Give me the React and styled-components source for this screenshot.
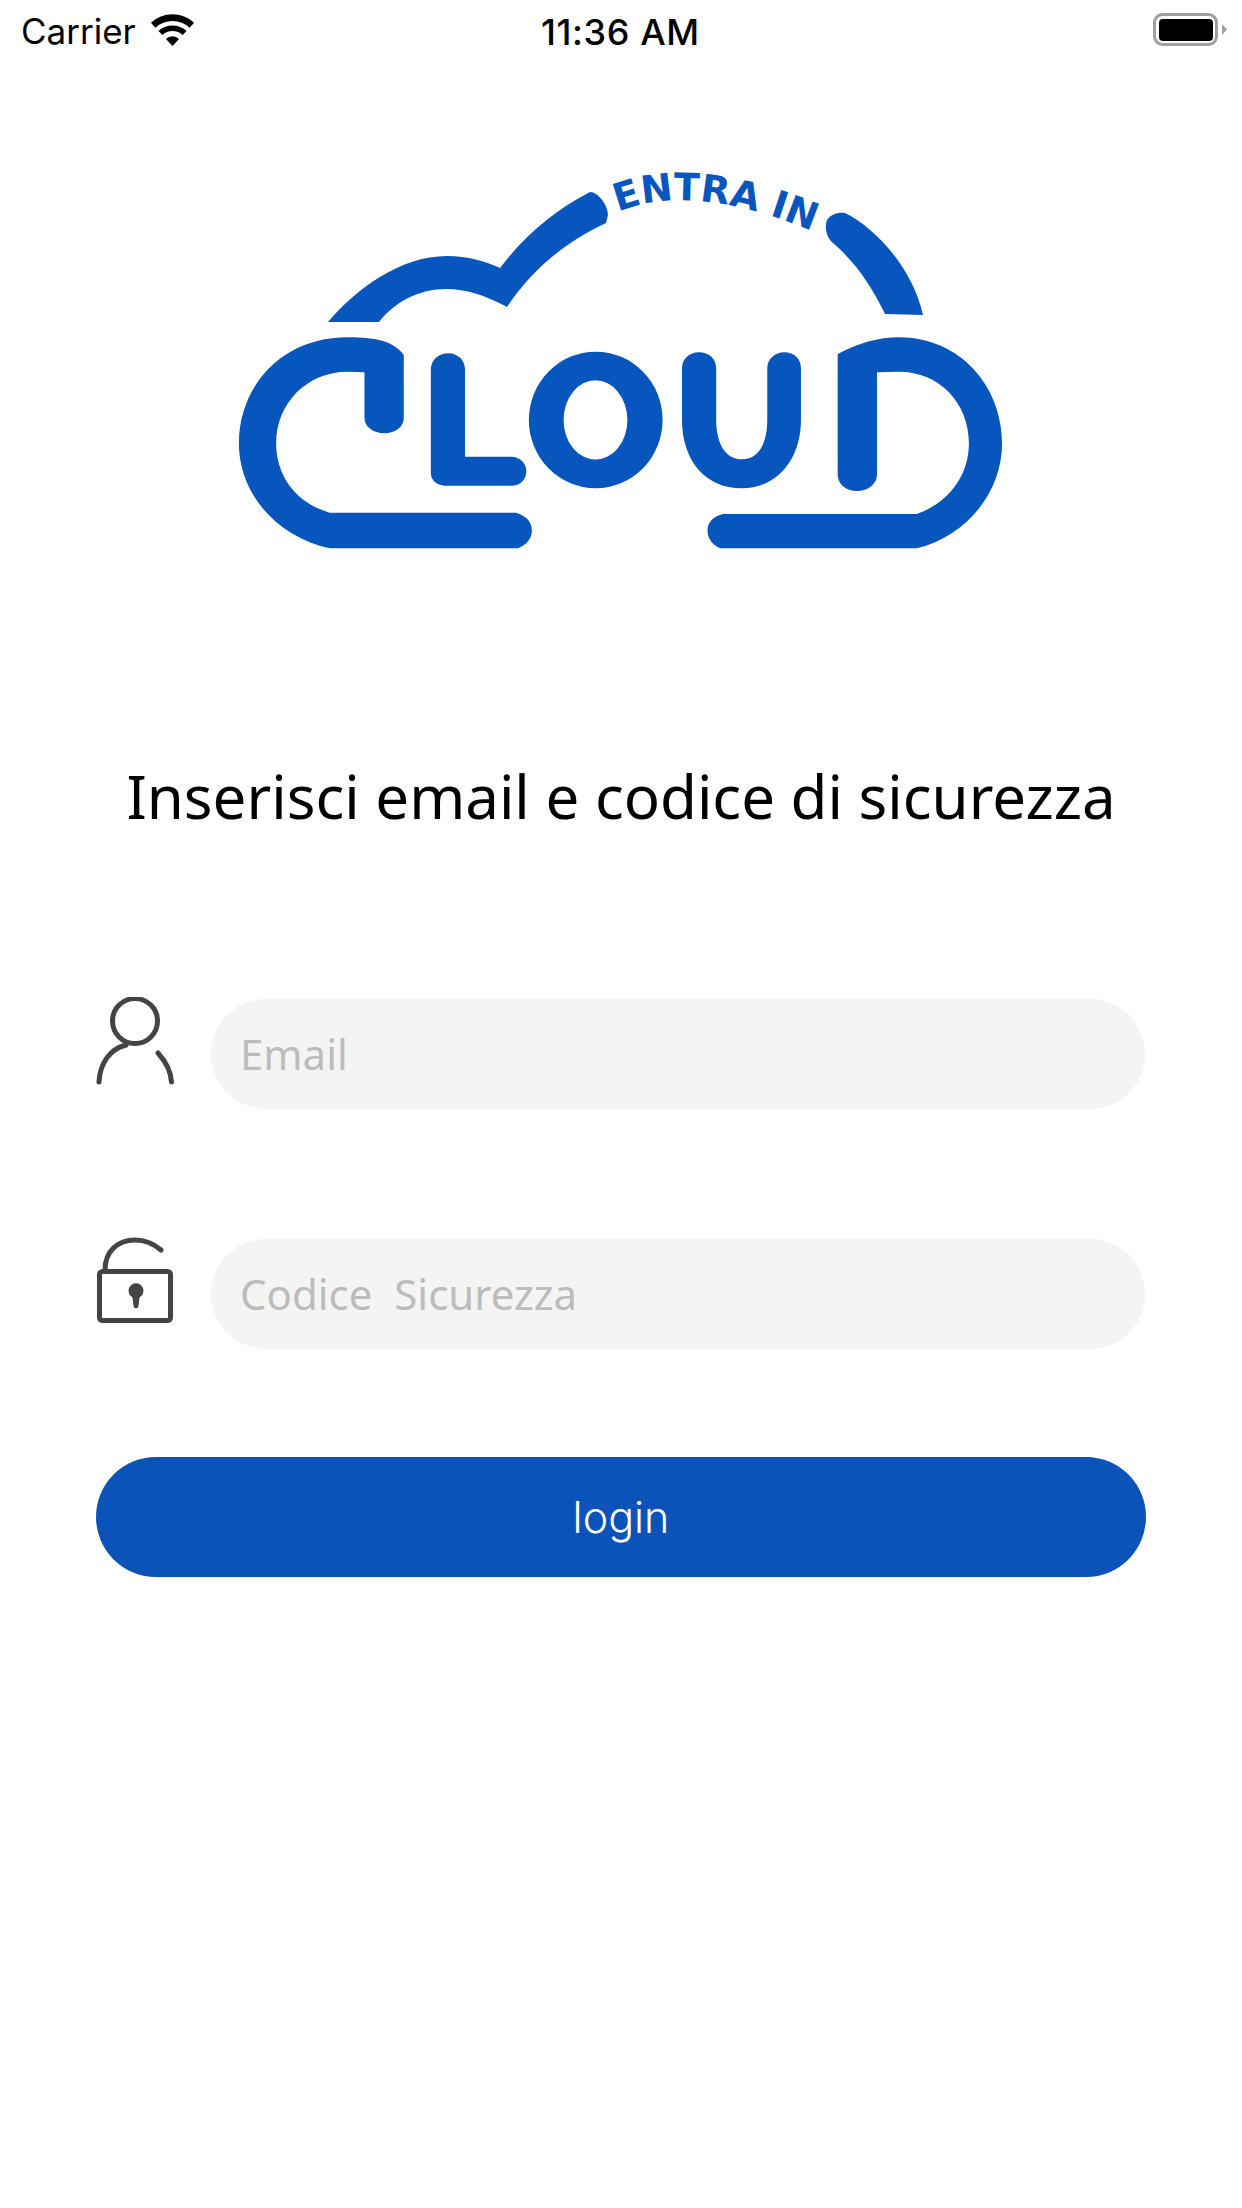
import React from 'react'
import styled, { createGlobalStyle } from 'styled-components'

const GlobalStyle = createGlobalStyle`
    html, body {
        margin: 0;
        padding: 0;
        background: #fff;
    }
    * {
        box-sizing: border-box;
    }
`

function WifiIcon() {
    return (
        <svg width="45" height="32" viewBox="0 0 45 32" fill="none" stroke="#000">
            <path d="M3.2 11.3 A28.3 28.3 0 0 1 41.8 11.3" strokeWidth="6.7" />
            <path d="M10.4 19 A17.8 17.8 0 0 1 34.6 19" strokeWidth="5.7" />
            <path d="M22.5 32 L15.9 24.9 A9.7 9.7 0 0 1 29.1 24.9 Z" fill="#000" stroke="none" />
        </svg>
    )
}

function BatteryIcon() {
    return (
        <svg width="74" height="33" viewBox="0 0 74 33">
            <rect x="1.5" y="1.5" width="62" height="30" rx="8" fill="none" stroke="#a0a0a0" strokeWidth="3" />
            <rect x="6" y="6" width="54" height="22" rx="4" fill="#000" />
            <path d="M69 11 L74 16.5 L69 22 Z" fill="#a0a0a0" />
        </svg>
    )
}

function Logo() {
    const blue = '#0756be'
    return (
        <LogoSvg viewBox="1 0 800 400">
            <g fill={blue}>
                <path d="M108 162 C135 130 180 96 227 96 C248 96 265 101 280 108 C305 75 335 50 370 32 C378 32 388 45 388 55 L386 63 C350 80 315 105 287 147 C265 135 245 129 227 129 C198 129 175 142 159 162 Z" />
                <path d="M625 53 C652 66 692 105 703 155 L665 154 C651 125 635 102 613 83 C605 76 605 65 607 60 C611 54 618 52 625 53 Z" />
            </g>
            <g transform="scale(0.5105 0.3333)" fill={blue}>
                <path d="M360 585 C340 545 310 532 250 532 C120 532 37 680 37 850 C37 1000 110 1130 215 1165 L583 1165 C600 1155 611 1135 611 1112 C611 1085 600 1068 580 1058 L215 1058 C150 1030 110 950 110 850 C110 730 170 635 250 635 L283 637 L283 775 C283 800 300 820 322 820 C344 820 360 800 360 775 Z" />
                <path d="M413 630 C413 600 428 580 447 580 C466 580 480 600 480 630 L480 890 L570 890 C588 890 600 910 600 933 C600 960 588 977 570 977 L440 977 C425 977 413 960 413 940 Z" />
                <path fillRule="evenodd" d="M605 780 A131 205 0 1 1 867 780 A131 205 0 1 1 605 780 Z M673 780 A62 118 0 1 0 798 780 A62 118 0 1 0 673 780 Z" />
                <path d="M905 625 C905 597 920 577 938 577 C958 577 972 597 972 625 L972 780 C972 850 990 898 1022 898 C1055 898 1072 850 1072 780 L1072 625 C1072 597 1088 577 1105 577 C1125 577 1138 597 1138 625 L1138 780 C1138 900 1090 985 1022 985 C950 985 905 900 905 780 Z" />
                <path d="M1210 582 C1250 550 1290 532 1330 532 C1450 532 1532 680 1532 850 C1532 1000 1460 1130 1365 1165 L980 1165 C965 1155 955 1135 955 1112 C955 1088 965 1070 985 1062 L1365 1062 C1425 1030 1467 950 1467 850 C1467 730 1410 635 1330 635 L1287 637 L1287 945 C1287 970 1270 993 1248 993 C1225 993 1210 970 1210 945 Z" />
            </g>
            <path id="logo-arc" d="M398 52 C440 34 505 34 594 72" fill="none" />
            <LogoText>
                <textPath href="#logo-arc" textLength="200" lengthAdjust="spacing">ENTRA IN</textPath>
            </LogoText>
        </LogoSvg>
    )
}

function UserIcon() {
    return (
        <svg width="78" height="88" viewBox="0 0 78 88" fill="none" stroke="#444" strokeWidth="5" strokeLinecap="round">
            <circle cx="39" cy="24" r="22.5" />
            <path d="M3 85 C4 66 14 52 30 48" />
            <path d="M62 56 C70 65 75 74 75.5 85" />
        </svg>
    )
}

function LockIcon() {
    return (
        <svg width="78" height="88" viewBox="0 0 78 88" fill="none" stroke="#444" strokeWidth="5" strokeLinecap="round">
            <rect x="3.5" y="34.5" width="71" height="49" rx="3" />
            <path d="M9 33 C9 14 22 3 39 3 C50 3 58 7 65 13" />
            <circle cx="40" cy="53.7" r="7.5" fill="#444" stroke="none" />
            <path d="M36 56 L44 56 L42.5 69 C42 72 38 72 37.5 69 Z" fill="#444" stroke="none" />
        </svg>
    )
}

function App() {
    return (
        <Page>
            <GlobalStyle />
            <StatusBar>
                <StatusLeft>
                    <Carrier>Carrier</Carrier>
                    <WifiIcon />
                </StatusLeft>
                <Clock>11:36 AM</Clock>
                <StatusRight>
                    <BatteryIcon />
                </StatusRight>
            </StatusBar>
            <Logo />
            <Title>Inserisci email e codice di sicurezza</Title>
            <Form>
                <Row>
                    <IconBox><UserIcon /></IconBox>
                    <Field placeholder="Email" />
                </Row>
                <Row>
                    <IconBox><LockIcon /></IconBox>
                    <Field placeholder="Codice  Sicurezza" />
                </Row>
                <LoginButton>login</LoginButton>
            </Form>
        </Page>
    )
}

const Page = styled.div`
    width: 1242px;
    height: 2208px;
    background: #fff;
    display: flex;
    flex-direction: column;
    align-items: center;
    overflow: hidden;
`
const StatusBar = styled.div`
    width: 100%;
    height: 60px;
    padding: 13px 15px 0 21px;
    display: grid;
    grid-template-columns: 520px auto 1fr;
    align-items: start;
    font-family: Inter, "Liberation Sans", sans-serif;
    color: #000;
`
const StatusLeft = styled.div`
    display: flex;
    align-items: flex-start;
    gap: 14px;
    & svg {
        margin-top: 1px;
    }
`
const Carrier = styled.span`
    font-size: 35px;
    line-height: 36px;
`
const Clock = styled.span`
    font-size: 36px;
    line-height: 36px;
    font-weight: 500;
    letter-spacing: 0.6px;
    margin-top: 1px;
`
const StatusRight = styled.div`
    display: flex;
    justify-content: flex-end;
`
const LogoSvg = styled.svg`
    display: block;
    width: 800px;
    height: 400px;
    margin-top: 100px;
    flex: none;
`
const LogoText = styled.text`
    font-family: "DejaVu Sans", sans-serif;
    font-weight: 700;
    font-size: 38px;
    fill: #0756be;
`
const Title = styled.h1`
    margin: 196px 0 0;
    height: 80px;
    font-family: "Noto Sans", sans-serif;
    font-weight: 400;
    font-size: 60px;
    line-height: 80px;
    color: #000;
    white-space: nowrap;
`
const Form = styled.div`
    width: 100%;
    margin-top: 163px;
    padding: 0 96px;
    display: flex;
    flex-direction: column;
    gap: 130px;
`
const Row = styled.div`
    display: flex;
    align-items: flex-start;
    gap: 37px;
    height: 110px;
    margin-right: 1px;
`
const IconBox = styled.div`
    width: 78px;
    height: 88px;
    flex: none;
    margin-top: -2px;
    & svg {
        display: block;
    }
`
const Field = styled.input`
    flex: 1;
    min-width: 0;
    height: 110px;
    border: 0;
    outline: 0;
    border-radius: 55px;
    background: #f4f4f4;
    padding: 0 29px 2px;
    font-family: "Noto Sans", sans-serif;
    font-size: 42px;
    color: #333;
    &::placeholder {
        color: #bcbcbc;
        opacity: 1;
    }
`
const LoginButton = styled.button`
    width: 100%;
    height: 120px;
    margin-top: -22px;
    border: 0;
    border-radius: 60px;
    background: #0b52b9;
    color: #fff;
    font-family: Inter, sans-serif;
    font-weight: 300;
    font-size: 43px;
    padding: 0;
`

export default App
